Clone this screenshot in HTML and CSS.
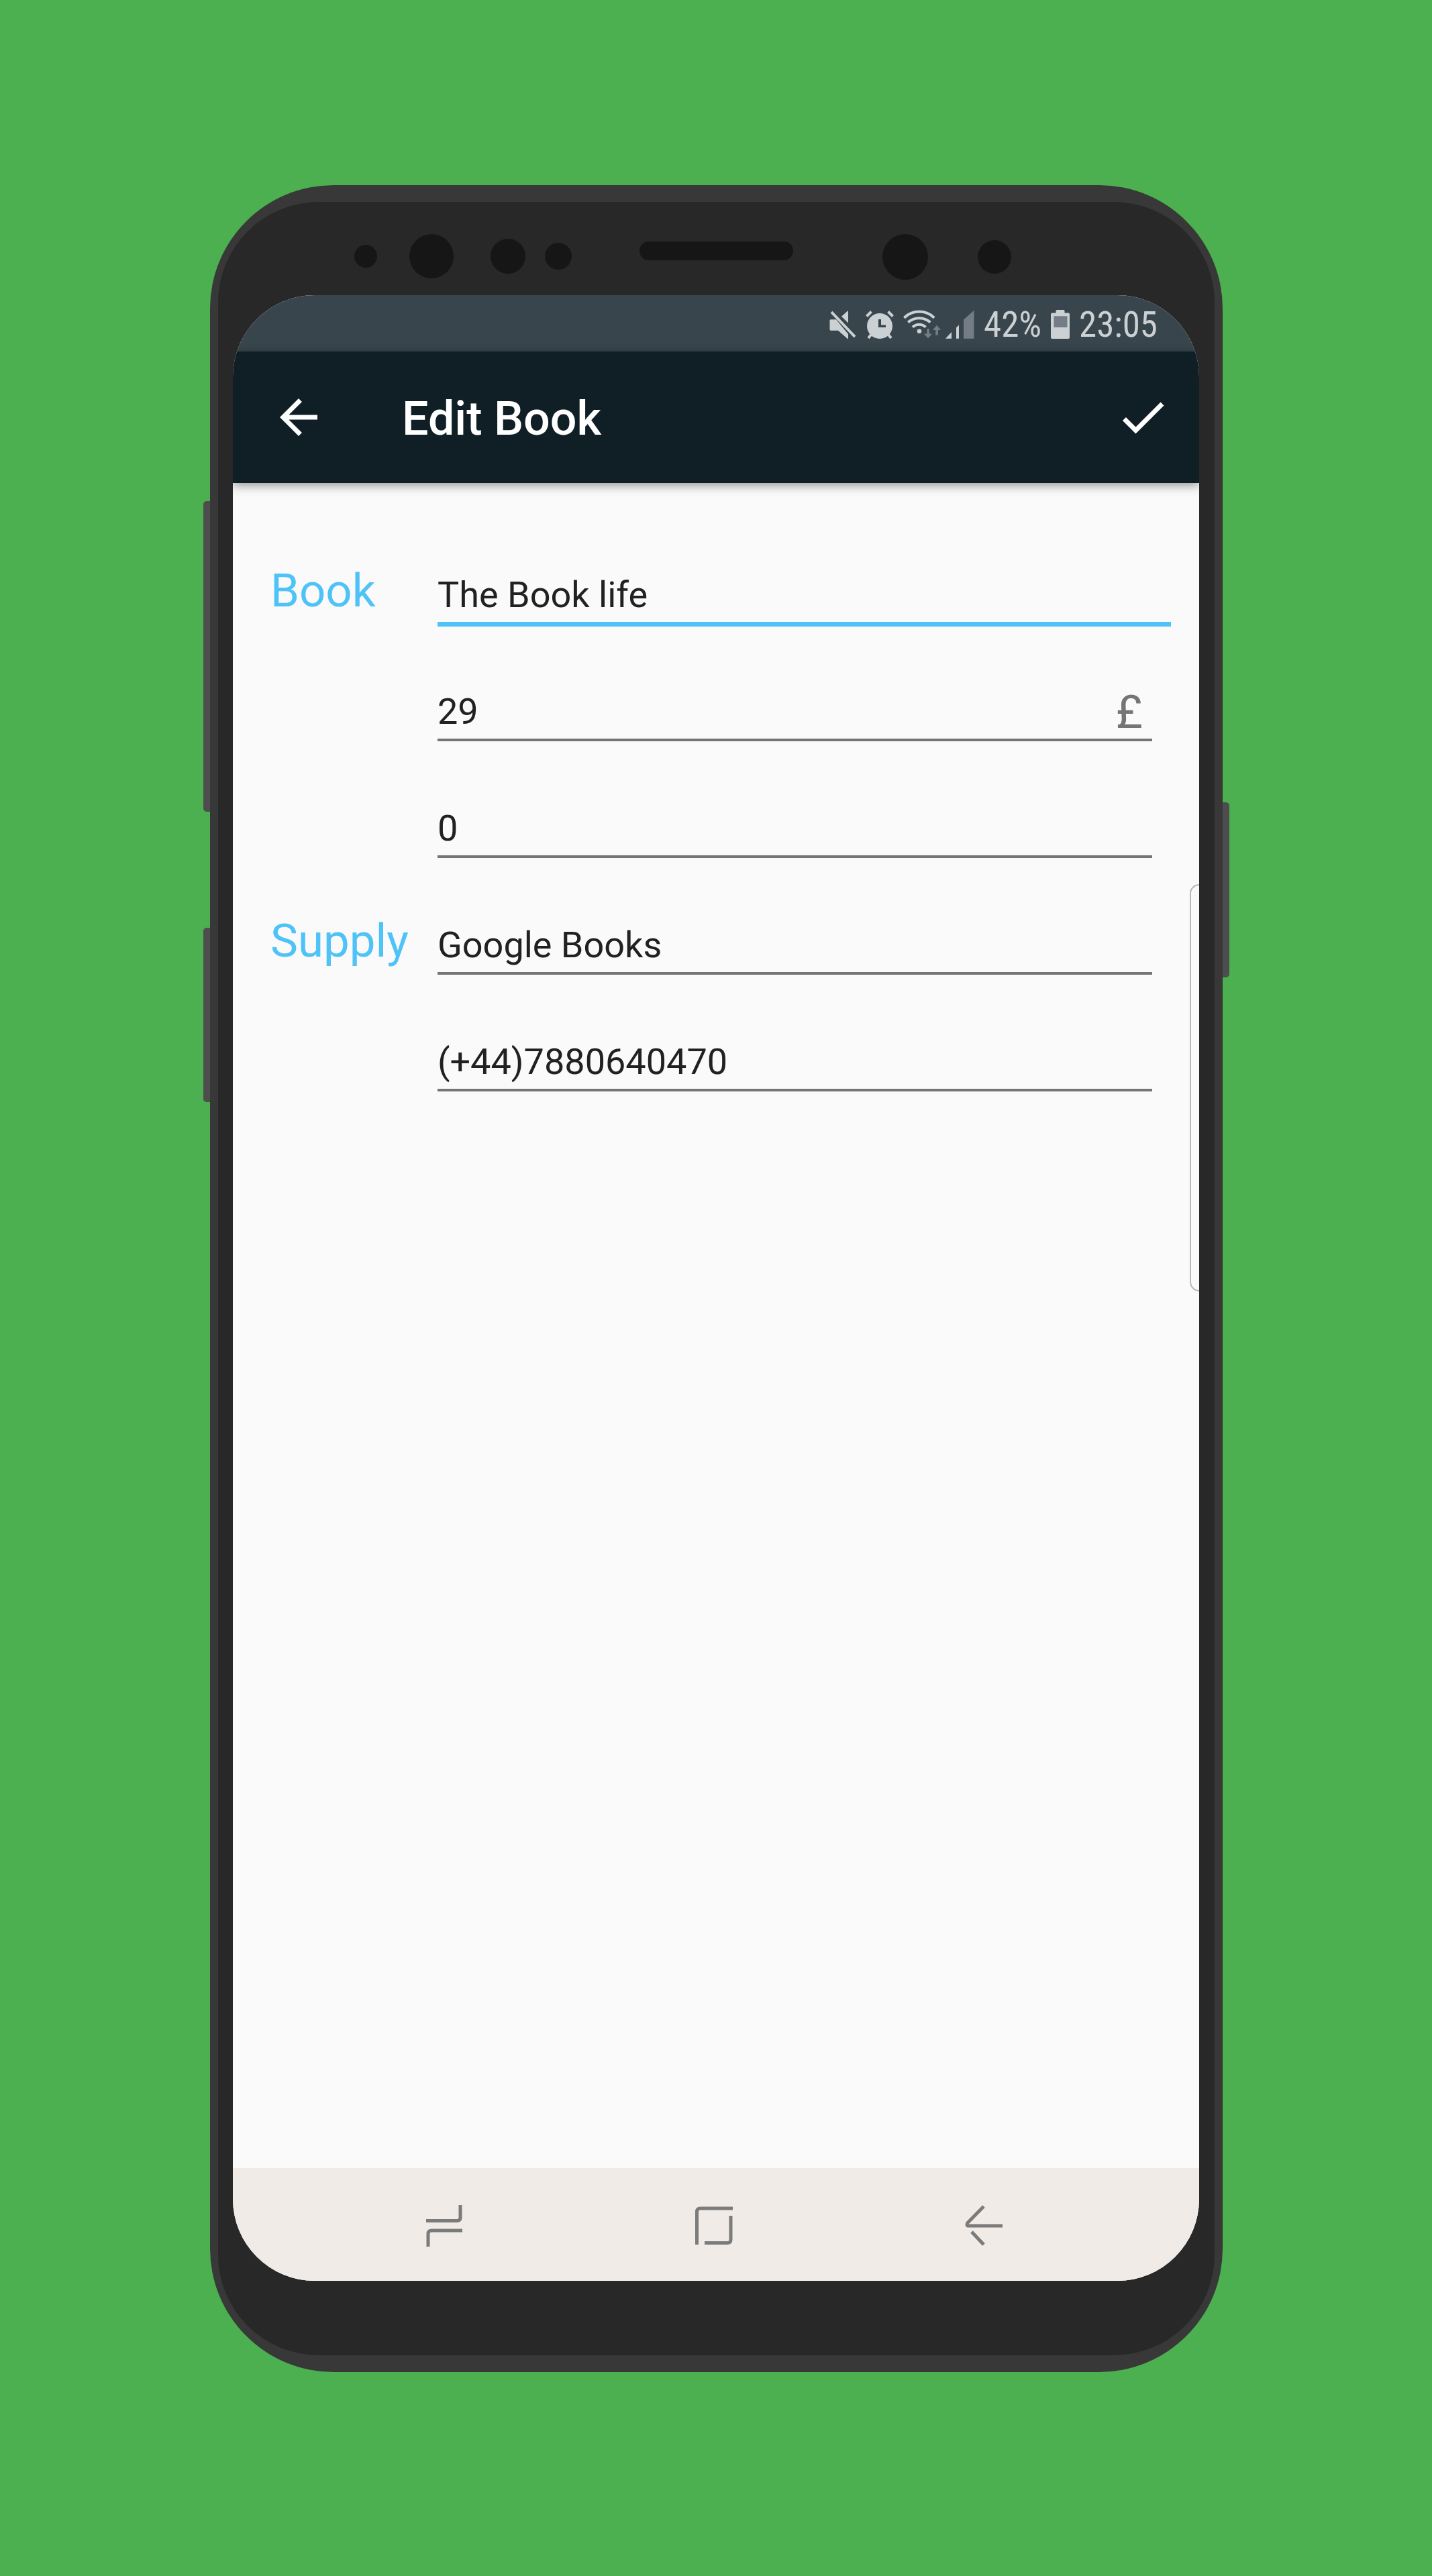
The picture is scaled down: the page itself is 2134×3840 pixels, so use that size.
FILE: index.html
```html
<!DOCTYPE html>
<html lang="en">
<head>
<meta charset="utf-8">
<meta name="viewport" content="width=device-width, initial-scale=1">
<title>Edit Book</title>
<link rel="stylesheet" href="styles.css">
</head>
<body class="stage">
<div class="phone">
  <span class="side-key side-key-volume"></span>
  <span class="side-key side-key-assist"></span>
  <span class="side-key side-key-power"></span>
  <div class="bezel">
    <svg class="sensors" viewBox="0 0 1485 139" aria-hidden="true">
      <circle cx="220" cy="81" r="17"/>
      <circle cx="318" cy="81" r="33"/>
      <circle cx="432" cy="81" r="26"/>
      <circle cx="507" cy="81" r="20"/>
      <rect x="628" y="59" width="229" height="28" rx="14"/>
      <circle cx="1024" cy="82" r="34"/>
      <circle cx="1157" cy="82" r="25"/>
    </svg>
    <div class="screen">
      <div class="status-bar">
        <svg class="status-icon" width="40" height="44" viewBox="0 0 40 44" aria-label="Muted">
          <path d="M2 14.3H10L28 36v7h-1L13 30.7H2Q.5 30.7.5 29V16Q.5 14.3 2 14.3zM18 9.7 26.6 1.9Q28 1 28 2.5V19.5z"/>
          <path d="M3 3.2 38 40" stroke="#cbd0d3" stroke-width="4"/>
        </svg>
        <svg class="status-icon" width="42" height="44" viewBox="0 0 42 44" aria-label="Alarm set">
          <circle cx="21" cy="24" r="19"/>
          <path d="M1.500 9.500 8.500 2.500M33.500 2.500 40.500 9.500M8 37 4 42M34 37 38 42" stroke="#cbd0d3" stroke-width="4"/>
          <path class="cutout" d="M19 14h4v8.500h7V26H19z"/>
        </svg>
        <div class="network">
          <svg class="status-icon" width="56" height="44" viewBox="0 0 56 44" aria-label="Wi-Fi">
            <path class="arc" d="M1.400 11.700A32 32 0 0 1 46.200 11.700M7.200 18.600A25 25 0 0 1 40.400 18.600M14 25.600A14 14 0 0 1 33.500 25.600"/>
            <circle cx="24" cy="31.700" r="3.300"/>
            <g class="dim">
              <path d="M35.300 28h3.600v7.500h4.300L37 42.300l-6.200-6.800h4.500z"/>
              <path d="M48.200 37.500h3.600V30H56L50 22.800 44 30h4.200z"/>
            </g>
          </svg>
          <svg class="status-icon" width="43" height="44" viewBox="0 0 43 44" aria-label="Signal strength">
            <path d="M0 42.700 9 33v9.700zM16 26.500l4-4v20.200h-4z"/>
            <path class="dim" d="M27 14.500 42.500.7v42H27z"/>
          </svg>
        </div>
        <span>42%</span>
        <svg class="status-icon" width="28" height="44" viewBox="0 0 28 44" aria-label="Battery">
          <path d="M9 0h10q1.500 0 1.500 1.500v3H26q2 0 2 2V41q0 2-2 2H2q-2 0-2-2V6.500q0-2 2-2h5.500v-3Q7.500 0 9 0z"/>
          <path class="dim" d="M4.500 9.300h20V26h-20z"/>
        </svg>
        <time>23:05</time>
      </div>

      <header class="app-bar">
        <button class="icon-button" type="button" aria-label="Back">
          <svg width="84" height="84" viewBox="0 0 24 24"><path d="M20 11H7.830l5.590-5.590L12 4l-8 8 8 8 1.410-1.410L7.830 13H20v-2z"/></svg>
        </button>
        <h1 class="app-title">Edit Book</h1>
        <button class="icon-button" type="submit" form="book-form" aria-label="Save">
          <svg width="84" height="84" viewBox="0 0 24 24"><path d="M9 16.170 4.830 12l-1.420 1.410L9 19 21 7l-1.410-1.410z"/></svg>
        </button>
      </header>

      <main class="content">
        <form class="book-form" id="book-form">
          <label class="group-label" for="title">Book</label>
          <input class="field field-active" id="title" type="text" value="The Book life">
          <div class="price">
            <input class="field" type="text" inputmode="decimal" aria-label="Price" value="29">
            <span class="currency">£</span>
          </div>
          <input class="field" type="text" inputmode="numeric" aria-label="Quantity" value="0">
          <label class="group-label" for="supplier">Supply</label>
          <input class="field" id="supplier" type="text" value="Google Books">
          <input class="field" type="tel" aria-label="Supplier phone" value="(+44)7880640470">
        </form>
      </main>
      <span class="edge-handle"></span>

      <nav class="nav-bar">
        <button class="nav-button" type="button" aria-label="Recent apps">
          <svg width="62" height="62" viewBox="0 0 62 62"><path d="M4 23.500h46q5 0 5-5V0M7 62V43q0-5 5-5h46"/></svg>
        </button>
        <button class="nav-button" type="button" aria-label="Home">
          <svg width="62" height="62" viewBox="0 0 62 62"><path d="M5.500 59V10q0-5 5-5H59M17 56.500h34q5 0 5-5V16"/></svg>
        </button>
        <button class="nav-button" type="button" aria-label="Back">
          <svg width="62" height="62" viewBox="0 0 62 62"><path d="M31 2 7 26.500Q4.500 31 8.500 31H59M13 40 31 59"/></svg>
        </button>
      </nav>
    </div>
  </div>
</div>
</body>
</html>
```
FILE: styles.css
```css
*,
*::before,
*::after {
  box-sizing: border-box;
}

.stage {
  display: flex;
  min-height: 100vh;
  margin: 0;
  padding: 276px 312px 304px 313px;
  background: #4caf50;
  font-family: Roboto, "Noto Sans", sans-serif;
}

/* Handset */
.phone {
  position: relative;
  display: flex;
  flex: 1;
  min-width: 0;
  padding: 25px 12px;
  border-radius: 184px;
  background: #383838;
}

.bezel {
  display: flex;
  flex: 1;
  flex-direction: column;
  min-width: 0;
  padding-bottom: 111px;
  border-radius: 150px;
  background: #282828;
}

.sensors {
  display: block;
  width: 100%;
  fill: #161616;
}

.side-key {
  position: absolute;
  width: 10px;
  background: #4d4d4d;
}

.side-key-volume {
  top: 471px;
  right: 100%;
  height: 463px;
  border-radius: 5px 0 0 5px;
}

.side-key-assist {
  top: 1107px;
  right: 100%;
  height: 260px;
  border-radius: 5px 0 0 5px;
}

.side-key-power {
  top: 920px;
  left: 100%;
  height: 261px;
  border-radius: 0 5px 5px 0;
}

.screen {
  position: relative;
  display: flex;
  flex: 1;
  flex-direction: column;
  margin: 0 23px 0 22px;
  overflow: hidden;
  border-radius: 122px;
  background: #fafafa;
}

/* Status bar */
.status-bar {
  display: flex;
  align-items: center;
  justify-content: flex-end;
  gap: 14px;
  height: 84px;
  padding: 4px 62px 0 0;
  background: #38454d;
  color: #cbd0d3;
  font-family: "Roboto Condensed", Roboto, sans-serif;
  font-size: 53px;
  line-height: 62px;
}

.network {
  display: flex;
  gap: 7px;
}

.status-icon {
  fill: #cbd0d3;
}

.status-icon .arc {
  fill: none;
  stroke: #cbd0d3;
  stroke-width: 4;
}

.status-icon .cutout {
  fill: #38454d;
}

.status-icon .dim {
  fill: #747d85;
}

/* App bar */
.app-bar {
  z-index: 1;
  display: flex;
  align-items: center;
  height: 196px;
  padding: 0 42px 0 56px;
  background: #101e26;
  box-shadow: 0 4px 14px rgba(0, 0, 0, 0.4);
  color: #fff;
}

.app-title {
  flex: 1;
  margin: 0 0 0 112px;
  padding-top: 4px;
  font-size: 70px;
  font-weight: 500;
  line-height: 84px;
}

.icon-button,
.nav-button {
  display: flex;
  align-items: center;
  justify-content: center;
  padding: 0;
  border: 0;
  background: none;
}

.icon-button svg {
  fill: #fff;
}

/* Form */
.content {
  flex: 1;
  padding: 133px 42px 0 56px;
}

.book-form {
  display: grid;
  grid-template-columns: 249px 1fr;
  grid-auto-rows: 174px;
  align-items: start;
}

.group-label {
  color: #4fc3f7;
  font-size: 69px;
  line-height: 56px;
}

.field {
  grid-column: 2;
  width: calc(100% - 28px);
  height: 78px;
  padding: 0 0 8px;
  border: 0;
  border-bottom: 4px solid #757575;
  border-radius: 0;
  outline: 0;
  background: none;
  color: #212121;
  font-family: inherit;
  font-size: 54px;
  line-height: 66px;
}

.field-active {
  width: 100%;
  height: 81px;
  border-bottom: 7px solid #4fc3f7;
}

.price {
  position: relative;
  grid-column: 2;
}

.currency {
  position: absolute;
  top: 7px;
  right: 42px;
  color: #757575;
  font-size: 69px;
  line-height: 56px;
}

.edge-handle {
  position: absolute;
  top: 878px;
  right: -2px;
  width: 16px;
  height: 607px;
  border: 2px solid #b8b8b8;
  border-right: 0;
  border-radius: 14px 0 0 14px;
}

/* System navigation */
.nav-bar {
  display: grid;
  grid-template-columns: repeat(3, 1fr);
  height: 168px;
  padding: 4px 120px 0 114px;
  background: #f0ebe6;
}

.nav-button svg {
  fill: none;
  stroke: #7b7b7b;
  stroke-width: 5;
}
```
